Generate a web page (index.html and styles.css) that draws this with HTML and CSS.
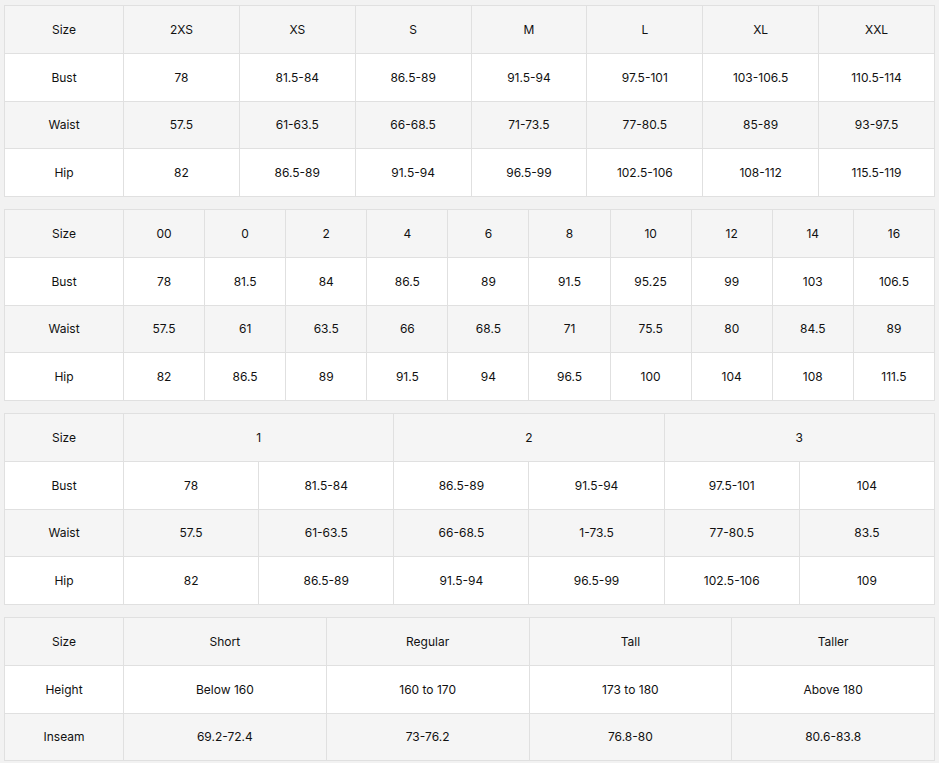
FILE: index.html
```html
<!DOCTYPE html>
<html>
<head>
<meta charset="utf-8">
<link rel="stylesheet" href="styles.css">
</head>
<body>
<div class="page">
  <table class="chart">
    <colgroup><col class="first"><col><col><col><col><col><col><col></colgroup>
    <tr class="head"><td>Size</td><td>2XS</td><td>XS</td><td>S</td><td>M</td><td>L</td><td>XL</td><td>XXL</td></tr>
    <tr><td>Bust</td><td>78</td><td>81.5-84</td><td>86.5-89</td><td>91.5-94</td><td>97.5-101</td><td>103-106.5</td><td>110.5-114</td></tr>
    <tr class="alt"><td>Waist</td><td>57.5</td><td>61-63.5</td><td>66-68.5</td><td>71-73.5</td><td>77-80.5</td><td>85-89</td><td>93-97.5</td></tr>
    <tr><td>Hip</td><td>82</td><td>86.5-89</td><td>91.5-94</td><td>96.5-99</td><td>102.5-106</td><td>108-112</td><td>115.5-119</td></tr>
  </table>

  <table class="chart">
    <colgroup><col class="first"><col><col><col><col><col><col><col><col><col><col></colgroup>
    <tr class="head"><td>Size</td><td>00</td><td>0</td><td>2</td><td>4</td><td>6</td><td>8</td><td>10</td><td>12</td><td>14</td><td>16</td></tr>
    <tr><td>Bust</td><td>78</td><td>81.5</td><td>84</td><td>86.5</td><td>89</td><td>91.5</td><td>95.25</td><td>99</td><td>103</td><td>106.5</td></tr>
    <tr class="alt"><td>Waist</td><td>57.5</td><td>61</td><td>63.5</td><td>66</td><td>68.5</td><td>71</td><td>75.5</td><td>80</td><td>84.5</td><td>89</td></tr>
    <tr><td>Hip</td><td>82</td><td>86.5</td><td>89</td><td>91.5</td><td>94</td><td>96.5</td><td>100</td><td>104</td><td>108</td><td>111.5</td></tr>
  </table>

  <table class="chart">
    <colgroup><col class="first"><col><col><col><col><col><col></colgroup>
    <tr class="head"><td>Size</td><td colspan="2">1</td><td colspan="2">2</td><td colspan="2">3</td></tr>
    <tr><td>Bust</td><td>78</td><td>81.5-84</td><td>86.5-89</td><td>91.5-94</td><td>97.5-101</td><td>104</td></tr>
    <tr class="alt"><td>Waist</td><td>57.5</td><td>61-63.5</td><td>66-68.5</td><td>1-73.5</td><td>77-80.5</td><td>83.5</td></tr>
    <tr><td>Hip</td><td>82</td><td>86.5-89</td><td>91.5-94</td><td>96.5-99</td><td>102.5-106</td><td>109</td></tr>
  </table>

  <table class="chart">
    <colgroup><col class="first"><col><col><col><col></colgroup>
    <tr class="head"><td>Size</td><td>Short</td><td>Regular</td><td>Tall</td><td>Taller</td></tr>
    <tr><td>Height</td><td>Below 160</td><td>160 to 170</td><td>173 to 180</td><td>Above 180</td></tr>
    <tr class="alt"><td>Inseam</td><td>69.2-72.4</td><td>73-76.2</td><td>76.8-80</td><td>80.6-83.8</td></tr>
  </table>
</div>
</body>
</html>
```

FILE: styles.css
```css
html, body {
  margin: 0;
  padding: 0;
  background: #f2f2f2;
}

.page {
  display: flex;
  flex-direction: column;
  gap: 12px;
  padding: 5px 4px 0 4px;
}

.chart {
  width: 931px;
  table-layout: fixed;
  border-collapse: separate;
  border-spacing: 0;
  border-top: 1px solid #e0e0e0;
  border-left: 1px solid #e0e0e0;
  font-family: "Inter", "Noto Sans", sans-serif;
  font-size: 12px;
  color: #111;
  background: #fff;
}

.chart col.first {
  width: 119px;
}

.chart td {
  height: 46.75px;
  padding: 0;
  text-align: center;
  vertical-align: middle;
  border-right: 1px solid #e0e0e0;
  border-bottom: 1px solid #e0e0e0;
}

.chart tr.head td,
.chart tr.alt td {
  background: #f5f5f5;
}
```
